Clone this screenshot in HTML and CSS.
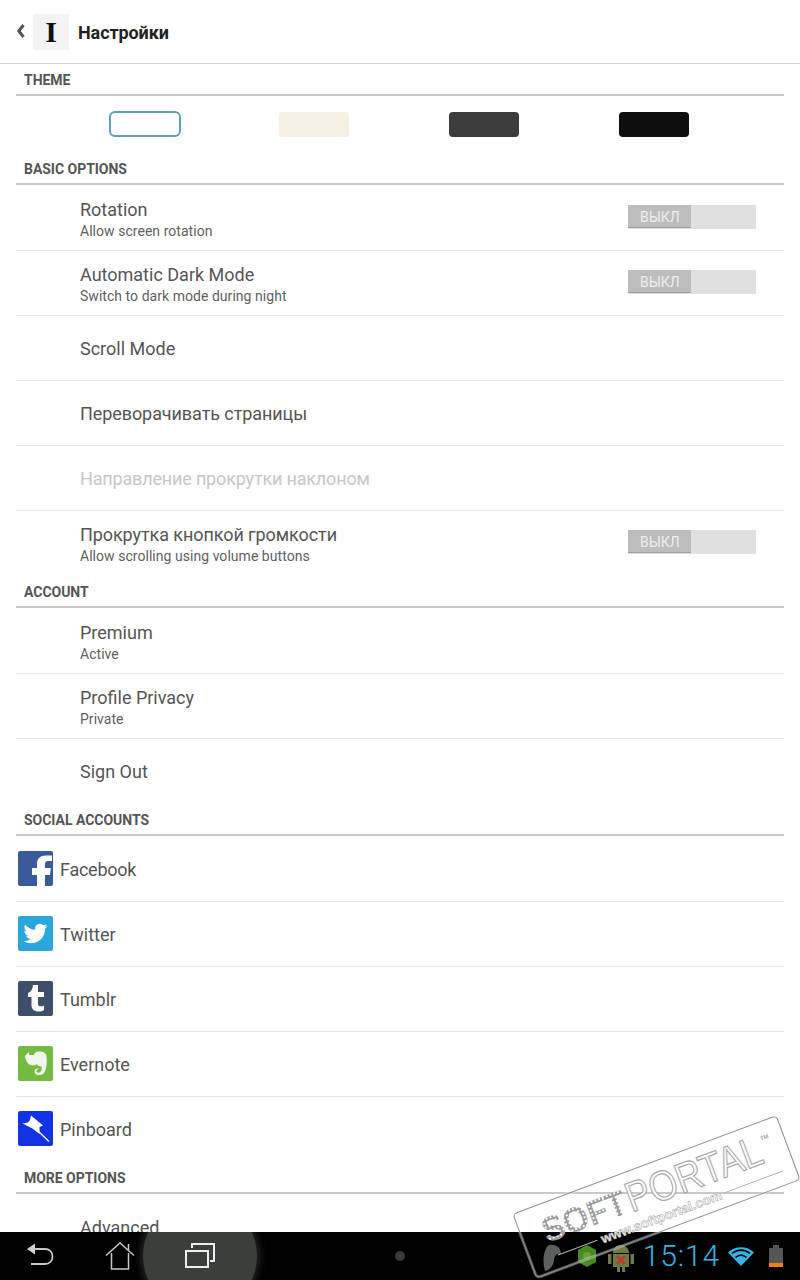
FILE: index.html
```html
<!DOCTYPE html>
<html lang="ru">
<head>
<meta charset="utf-8">
<title>Настройки</title>
<link rel="stylesheet" href="styles.css">
</head>
<body>
<div class="screen">
  <main class="app">
    <header class="appbar">
      <svg class="chevron" width="9" height="14" viewBox="0 0 9 14"><path d="M7.500 1 2.800 7 7.500 13" fill="none" stroke="#555" stroke-width="3"/></svg>
      <div class="applogo">I</div>
      <h1 class="apptitle">Настройки</h1>
    </header>

    <section>
      <h2 class="sechead sechead-first">THEME</h2>
      <div class="themes">
        <div class="theme"><span class="swatch swatch-white"></span></div>
        <div class="theme"><span class="swatch swatch-sepia"></span></div>
        <div class="theme"><span class="swatch swatch-gray"></span></div>
        <div class="theme"><span class="swatch swatch-black"></span></div>
      </div>
    </section>

    <section>
      <h2 class="sechead">BASIC OPTIONS</h2>
      <div class="rows">
        <div class="row"><div class="rowtext rowtext-two"><div class="title">Rotation</div><div class="sub">Allow screen rotation</div></div><div class="switch"><span class="thumb">ВЫКЛ</span></div></div>
        <div class="row"><div class="rowtext rowtext-two"><div class="title">Automatic Dark Mode</div><div class="sub">Switch to dark mode during night</div></div><div class="switch"><span class="thumb">ВЫКЛ</span></div></div>
        <div class="row"><div class="rowtext"><div class="title">Scroll Mode</div></div></div>
        <div class="row"><div class="rowtext"><div class="title title-ru">Переворачивать страницы</div></div></div>
        <div class="row"><div class="rowtext"><div class="title title-off">Направление прокрутки наклоном</div></div></div>
        <div class="row row-last"><div class="rowtext rowtext-two"><div class="title title-ru">Прокрутка кнопкой громкости</div><div class="sub">Allow scrolling using volume buttons</div></div><div class="switch"><span class="thumb">ВЫКЛ</span></div></div>
      </div>
    </section>

    <section>
      <h2 class="sechead">ACCOUNT</h2>
      <div class="rows">
        <div class="row"><div class="rowtext rowtext-two"><div class="title">Premium</div><div class="sub">Active</div></div></div>
        <div class="row"><div class="rowtext rowtext-two"><div class="title">Profile Privacy</div><div class="sub">Private</div></div></div>
        <div class="row row-last"><div class="rowtext"><div class="title">Sign Out</div></div></div>
      </div>
    </section>

    <section>
      <h2 class="sechead">SOCIAL ACCOUNTS</h2>
      <div class="rows">
        <div class="row row-social">
          <svg class="socicon" viewBox="0 0 35 35"><rect width="35" height="35" rx="2" fill="#3a5a9b"/><path d="M27 35V24h5l.8-7H27v-3.500c0-2.500 1-3.500 3-3.500h4V4.500h-6c-6 0-9 3-9 8.500v4h-5v7h5v11z" fill="#fff"/></svg>
          <div class="title title-fb">Facebook</div>
        </div>
        <div class="row row-social">
          <svg class="socicon" viewBox="0 0 35 35"><rect width="35" height="35" rx="2" fill="#2ba6dd"/><g transform="translate(5.500 5.500)"><path fill="#fff" d="M23.953 4.570a10 10 0 01-2.825.775 4.958 4.958 0 002.163-2.723c-.951.555-2.005.959-3.127 1.184a4.920 4.920 0 00-8.384 4.482C7.690 8.095 4.067 6.130 1.640 3.162a4.822 4.822 0 00-.666 2.475c0 1.710.870 3.213 2.188 4.096a4.904 4.904 0 01-2.228-.616v.060a4.923 4.923 0 003.946 4.827 4.996 4.996 0 01-2.212.085 4.936 4.936 0 004.604 3.417 9.867 9.867 0 01-6.102 2.105c-.390 0-.779-.023-1.170-.067a13.995 13.995 0 007.557 2.209c9.053 0 13.998-7.496 13.998-13.985 0-.210 0-.420-.015-.630A9.935 9.935 0 0024 4.590z"/></g></svg>
          <div class="title">Twitter</div>
        </div>
        <div class="row row-social">
          <svg class="socicon" viewBox="0 0 35 35"><rect width="35" height="35" rx="2" fill="#3d4f6b"/><path d="M15 4h5v7h6v5h-6v7c0 2.500 2.500 3 6 1.500V29c-1.500 1-3.500 1.500-5.500 1.500-4.500 0-7-2.500-7-6.500v-8H10v-4c3-1 4.500-3.500 5-8z" fill="#fff"/></svg>
          <div class="title">Tumblr</div>
        </div>
        <div class="row row-social">
          <svg class="socicon" viewBox="0 0 35 35"><rect width="35" height="35" rx="2" fill="#74bb42"/><path d="M7 10 11 6c0 2-.3 3 1 3h4c0-2 2-3.500 5-3.500 5 0 7 1.500 7.500 5 .5 4 .5 9-1 13.500-1 3-3 5-6 5-3.500 0-5-1.500-5-3.500 0-2.500 2-3.500 4.500-3 0 1-2.500.7-2.500 2.500 0 1.500 1.500 2 3 1.500 2-.7 2.500-3.500 2-6-2-.5-4-.5-5-2.500-1 2-4 1.500-6 1-3-1-5-5-5.500-9z" fill="#f2f7ee"/></svg>
          <div class="title">Evernote</div>
        </div>
        <div class="row row-social row-last">
          <svg class="socicon" viewBox="0 0 35 35"><rect width="35" height="35" rx="2" fill="#1233e6"/><path d="M13 4.500 25 14.500 21.500 16 21.500 23 14.500 17.500 4.500 12.500 10 11.500 12 9z" fill="#fff"/><path d="M18 18 31 30.500" stroke="#fff" stroke-width="1.300"/></svg>
          <div class="title">Pinboard</div>
        </div>
      </div>
    </section>

    <section>
      <h2 class="sechead">MORE OPTIONS</h2>
      <div class="rows">
        <div class="row"><div class="rowtext"><div class="title">Advanced</div></div></div>
      </div>
    </section>
  </main>

  <nav class="sysbar">
    <div class="navbtns">
      <div class="navbtn">
        <svg width="30" height="28" viewBox="0 0 30 28"><path d="M2 7 10 1.500V12.500z" fill="#d0d0d0"/><path d="M9 7H20C24.500 7 27.500 10 27.500 14.500S24.500 22 20 22H6" fill="none" stroke="#c8c8c8" stroke-width="1.800"/></svg>
      </div>
      <div class="navbtn">
        <svg width="30" height="28" viewBox="0 0 30 28"><path d="M1 13.500 15 1 29 13.500M6.500 11V27H23.500V11M23.500 2V8" fill="none" stroke="#c8c8c8" stroke-width="1.500"/></svg>
      </div>
      <div class="navbtn navbtn-active">
        <svg width="30" height="26" viewBox="0 0 30 26"><path d="M7 5V1H29V18H25" fill="none" stroke="#eee" stroke-width="2"/><rect x="1" y="8" width="22" height="16" fill="none" stroke="#eee" stroke-width="2"/></svg>
      </div>
    </div>
    <span class="navdot"></span>
    <div class="status">
      <svg class="st-leaf" width="18" height="28" viewBox="0 0 18 28"><path d="M6 1C12 0 18 3 18 10 14 9 11 12 11 17 10 22 7 26 2 27 0 20 0 12 2 7 3 4 4 2 6 1z" fill="#5b5f5f"/></svg>
      <svg class="st-hex" width="20" height="24" viewBox="0 0 20 24"><path d="M10 1 19 6V18L10 23 1 18V6z" fill="#4a8a1f"/><circle cx="10" cy="12" r="4" fill="#6aa338"/></svg>
      <svg class="st-droid" width="28" height="30" viewBox="0 0 28 30"><path d="M6 10C6 5 10 2 14 2S22 5 22 10zM6 11H22V24H18V29H15V24H13V29H10V24H6zM1 11H4.500V21H1zM23.500 11H27V21H23.500z" fill="#6f7a45"/><path d="M10 13 18 21M18 13 10 21" stroke="#c0392b" stroke-width="2.500"/></svg>
      <span class="clock">15:14</span>
      <svg class="st-wifi" width="26" height="21" viewBox="0 0 26 21"><path d="M13 20 0 6.500C7 -.5 19 -.5 26 6.500z" fill="#33b5e5"/><path d="M4 7.500C9.500 3 16.500 3 22 7.500M7.500 11.500C11 8.500 15 8.500 18.500 11.500" fill="none" stroke="#000" stroke-width="1.600"/></svg>
      <div class="battery"><span class="batcap"></span><span class="batbody"><span class="batlevel"></span></span></div>
    </div>
  </nav>

  <svg class="watermark" width="800" height="1280" viewBox="0 0 800 1280">
    <defs>
      <pattern id="dots" width="4" height="4" patternUnits="userSpaceOnUse"><rect x=".5" y=".5" width="3" height="3" fill="#fff" stroke="#9c9c9c" stroke-width="1"/></pattern>
    </defs>
    <g transform="translate(656 1197) rotate(-20.500)">
      <rect x="-140" y="-34" width="281" height="68" rx="4" fill="none" stroke="#fff" stroke-width="3" opacity=".35"/>
      <rect x="-140" y="-34" width="281" height="68" rx="4" fill="none" stroke="#8f8f8f" stroke-width="1"/>
      <text class="wm-soft" x="-118" y="5" textLength="88" lengthAdjust="spacingAndGlyphs" fill="url(#dots)">SOFT</text>
      <text class="wm-portal" x="-28" y="6" textLength="143" lengthAdjust="spacingAndGlyphs">PORTAL</text>
      <text class="wm-url" x="-66" y="25" textLength="128" lengthAdjust="spacingAndGlyphs">www.softportal.com</text>
      <text class="wm-tm" x="118" y="-16">TM</text>
      <path d="M-112 20H-70M66 20H128" stroke="#b0b0b0" stroke-width="1"/>
    </g>
  </svg>
</div>
</body>
</html>
```
FILE: styles.css
```css
* { box-sizing: border-box; }
html, body { margin: 0; padding: 0; background: #fff; }
body { font-family: Roboto, "Noto Sans", sans-serif; color: #555; }

.screen {
  position: relative;
  width: 800px;
  height: 1280px;
  display: flex;
  flex-direction: column;
  overflow: hidden;
}
.app { flex: 1; min-height: 0; overflow: hidden; }

.appbar {
  height: 64px;
  padding-left: 16px;
  display: flex;
  align-items: center;
  border-bottom: 1px solid #d4d4d4;
}
.chevron { margin-right: 8px; margin-top: -1px; }
.applogo {
  width: 36px;
  height: 36px;
  background: #f3f3f3;
  font: bold 30px/36px "Liberation Serif", serif;
  color: #111;
  text-align: center;
}
.apptitle { margin: 1px 0 0 9px; font-size: 18px; font-weight: 700; color: #222; letter-spacing: -.1px; }

.sechead {
  height: 33px;
  margin: 0 16px;
  padding: 3px 0 0 8px;
  display: flex;
  align-items: center;
  border-bottom: 2px solid #c8c8c8;
  font-size: 14px;
  font-weight: 700;
  color: #555;
  letter-spacing: -.03px;
}
.sechead-first { height: 32px; padding-top: 2px; }

.themes {
  height: 56px;
  width: 678.5px;
  margin-left: 60px;
  display: grid;
  grid-template-columns: repeat(4, 1fr);
  align-items: start;
}
.theme { display: flex; justify-content: center; padding-top: 16px; }
.swatch { display: block; width: 70px; height: 25px; border-radius: 3px; }
.swatch-white { width: 72px; height: 26px; margin-top: -1px; border: 2px solid #5f9fb8; border-radius: 6px; background: #fff; }
.swatch-sepia { background: #f6f0e2; }
.swatch-gray { background: #3d3d3d; border-radius: 4px; }
.swatch-black { background: #0e0e0e; border-radius: 4px; }

.rows { padding-top: 1px; }
.row {
  height: 65px;
  margin: 0 16px;
  padding: 0 28px 0 64px;
  display: flex;
  align-items: center;
  justify-content: space-between;
  border-bottom: 1px solid #e6e6e6;
}
.row-last { height: 64px; border-bottom: 0; }
.row-social { padding: 0 0 0 2px; justify-content: flex-start; gap: 7px; }
.rowtext-two { padding-top: 4px; }

.title { font-size: 18px; line-height: 21px; color: #555; }
.title-ru { letter-spacing: -.08px; }
.title-off { color: #c6c6c6; letter-spacing: -.17px; }
.title-fb { letter-spacing: -.25px; }
.sub { font-size: 14px; line-height: 22px; color: #5f5f5f; letter-spacing: .04px; }

.switch { width: 128px; height: 24px; margin-bottom: 2px; background: #e0e0e0; }
.thumb {
  display: block;
  width: 63px;
  height: 23px;
  padding-left: 12px;
  background: #bdbdbd;
  border-bottom: 1px solid #9c9c9c;
  font-size: 14px;
  line-height: 25px;
  color: #efefef;
}

.socicon { width: 35px; height: 35px; flex: none; margin-bottom: 2px; }

.sysbar {
  position: relative;
  height: 48px;
  flex: none;
  background: #000;
  display: grid;
  grid-template-columns: 1fr auto 1fr;
  align-items: center;
  overflow: hidden;
}
.navbtns { display: flex; }
.navbtn {
  position: relative;
  width: 80px;
  height: 48px;
  display: flex;
  align-items: center;
  justify-content: center;
}
.navbtn svg { position: relative; }
.navbtn-active::before {
  content: "";
  position: absolute;
  left: -17px;
  top: -33px;
  width: 114px;
  height: 114px;
  border-radius: 50%;
  background: #3a3f3c;
  box-shadow: 0 0 8px 2px rgba(58, 63, 60, .7);
}
.navdot { width: 10px; height: 10px; border-radius: 50%; background: #3a3a3a; }

.status {
  display: flex;
  align-items: center;
  justify-content: flex-end;
  height: 48px;
  padding-right: 16px;
}
.st-leaf { margin-right: 16px; margin-top: 4px; }
.st-hex { margin-right: 10px; }
.st-droid { margin-right: 8px; margin-top: 4px; }
.clock { font-size: 30px; font-weight: 300; color: #33b5e5; line-height: 48px; margin-right: 8px; letter-spacing: .9px; }
.st-wifi { margin-right: 14px; }
.battery { width: 16px; display: flex; flex-direction: column; align-items: center; }
.batcap { width: 6px; height: 3px; background: #555; }
.batbody { width: 14px; height: 19px; background: #555; display: flex; align-items: flex-end; }
.batlevel { width: 100%; height: 4px; background: #f08020; }

.watermark { position: absolute; left: 0; top: 0; pointer-events: none; }
.wm-soft { font: 700 35px "Liberation Sans", sans-serif; }
.wm-portal { font: 400 42px "Liberation Sans", sans-serif; fill: #fff; stroke: #a8a8a8; stroke-width: 1.2; }
.wm-url { font: 700 13px "Liberation Sans", sans-serif; fill: #fff; stroke: #b0b0b0; stroke-width: .6; }
.wm-tm { font: 700 6px "Liberation Sans", sans-serif; fill: #aaa; }
```
